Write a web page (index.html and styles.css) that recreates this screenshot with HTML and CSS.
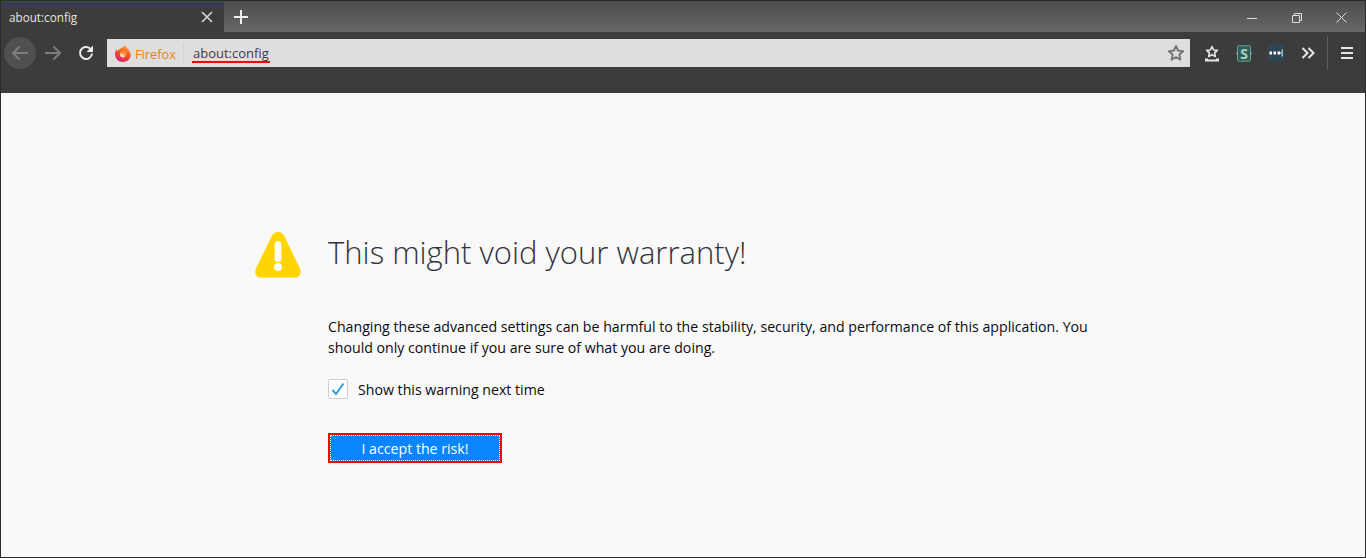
FILE: index.html
```html
<!DOCTYPE html>
<html lang="en">
<head>
<meta charset="utf-8">
<title>about:config</title>
<link rel="stylesheet" href="styles.css">
</head>
<body>
<div class="window">
  <header class="titlebar">
    <div class="tab">
      <span class="tab-title">about:config</span>
      <svg class="tab-close" width="12" height="12" viewBox="0 0 12 12"><path d="M1 1l10 10M11 1L1 11" stroke="#d8d8d8" stroke-width="1.6" fill="none"/></svg>
    </div>
    <div class="new-tab">
      <svg width="14" height="14" viewBox="0 0 14 14"><path d="M7 0v14M0 7h14" stroke="#eee" stroke-width="2" fill="none"/></svg>
    </div>
    <div class="spacer"></div>
    <div class="win-controls">
      <svg width="10" height="10" viewBox="0 0 10 10"><path d="M0 5.500h10" stroke="#ddd" fill="none"/></svg>
      <svg width="10" height="10" viewBox="0 0 10 10"><path d="M.5 2.500h7v7h-7zM2.500 2.500V.5h7v7h-2" stroke="#ddd" fill="none"/></svg>
      <svg width="11" height="11" viewBox="0 0 11 11"><path d="M.5.5l10 10M10.500.5l-10 10" stroke="#ddd" fill="none"/></svg>
    </div>
  </header>
  <nav class="toolbar">
    <div class="nav-buttons">
      <div class="back">
        <svg width="18" height="16" viewBox="0 0 18 16"><path d="M17 8H2M8.500 1.500L2 8l6.500 6.500" stroke="#7d7d7d" stroke-width="2" fill="none"/></svg>
      </div>
      <svg class="forward" width="18" height="16" viewBox="0 0 18 16"><path d="M1 8h15M9.500 1.500L16 8l-6.500 6.500" stroke="#7d7d7d" stroke-width="2" fill="none"/></svg>
      <svg class="reload" width="16" height="16" viewBox="0 0 16 16"><path d="M14 8.500A6 6 0 1 1 12 3.500" stroke="#eee" stroke-width="2" fill="none"/><path d="M15 0.500V7H8.500z" fill="#eee"/></svg>
    </div>
    <div class="urlbar">
      <svg class="ff-logo" width="16" height="17" viewBox="0 0 16 17">
        <defs><linearGradient id="ff" x1=".7" y1="0" x2=".3" y2="1"><stop offset="0" stop-color="#ffa52b"/><stop offset=".5" stop-color="#f4512b"/><stop offset="1" stop-color="#d9197a"/></linearGradient></defs>
        <path d="M10 .5c.2 1.500 2.800 2.500 3.800 4.500 1.500 2.500 2.200 4.500 2 5.800C15 14.500 12 17 8 17 3.500 17 0 13.500 0 9c0-2 .6-3.800 1.500-5 0 1 .4 1.600 1 2C4 3.500 7.500 3 10 .5z" fill="url(#ff)"/>
        <circle cx="8" cy="9.500" r="3" fill="#f7d9b8"/>
        <path d="M4.500 7.500c2.500-1.800 6-.8 6.300 2.300.2 2.300-1.800 3.700-3.600 3.300 2-.2 3-2 1.900-3.300-.9-1-2.500-.3-4.600-2.300z" fill="#f78a1f"/>
      </svg>
      <span class="ff-label">Firefox</span>
      <span class="url-sep"></span>
      <span class="url-text">about:config</span>
      <span class="spacer"></span>
      <svg class="star" width="18" height="18" viewBox="0 0 18 18"><path d="M9 2l2.100 4.600 5 .6-3.700 3.400 1 5L9 13.100l-4.400 2.500 1-5L1.900 7.200l5-.6z" stroke="#777" stroke-width="2" stroke-linejoin="round" fill="none"/></svg>
    </div>
    <div class="tools">
      <svg width="16" height="17" viewBox="0 0 16 17"><path d="M8 1.500l1.700 3.500 3.600.4-2.700 2.500.7 3.600L8 9.700l-3.300 1.800.7-3.600-2.700-2.500 3.600-.4z" stroke="#e6e6e6" stroke-width="1.600" stroke-linejoin="round" fill="none"/><path d="M1 13.500h3v1h8v-1h3v3H1z" fill="#e6e6e6"/></svg>
      <svg class="s-icon" width="16" height="17" viewBox="0 0 16 17"><rect x="1.500" y=".8" width="13" height="15.400" rx="1" fill="#2f5e56" stroke="#6c9e93"/><path d="M0 7.500l1.500 1-1.500 1zM16 7.500l-1.500 1 1.500 1z" fill="#8bb5aa"/><text class="s-glyph" x="8" y="13.500" text-anchor="middle">S</text></svg>
      <svg width="16" height="16" viewBox="0 0 16 16"><rect width="16" height="16" rx="1.500" fill="#2f4657"/><path d="M1.500 6.500h2.500v3H1.500zM5.500 6.500H8v3H5.500zM9.500 6.500H12v3H9.500zM12 7.500h2v1h-2z" fill="#fff"/><path d="M13.500 4.500h1.500v7h-1.500z" fill="#9fb2bf"/></svg>
      <svg class="chevrons" width="14" height="12" viewBox="0 0 14 12"><path d="M1.500 1l5 5-5 5M7.500 1l5 5-5 5" stroke="#e6e6e6" stroke-width="2" fill="none"/></svg>
    </div>
    <span class="tool-sep"></span>
    <svg class="menu" width="12" height="12" viewBox="0 0 12 12"><path d="M0 1h12M0 6h12M0 11h12" stroke="#e6e6e6" stroke-width="2" fill="none"/></svg>
  </nav>
  <main class="page">
    <div class="warning">
      <svg class="warn-icon" width="46" height="46" viewBox="0 0 46 46"><path d="M23 0c2.800 0 5 1.500 6.500 4.500L45 36.500c2 4.500-.5 9-5 9H6c-4.500 0-7-4.500-5-9L16.500 4.500C18 1.500 20.200 0 23 0z" fill="#ffd400"/><rect x="19.700" y="9" width="6.600" height="21" rx="3.300" fill="#fff"/><circle cx="23" cy="35" r="4" fill="#fff"/></svg>
      <div class="warn-body">
        <h1>This might void your warranty!</h1>
        <p>Changing these advanced settings can be harmful to the stability, security, and performance of this application. You should only continue if you are sure of what you are doing.</p>
        <label class="check">
          <span class="box"><svg width="14" height="14" viewBox="0 0 14 14"><path d="M1.500 8l3.500 4L12.500 1.500" stroke="#2e9bd8" stroke-width="2" fill="none"/></svg></span>
          <span>Show this warning next time</span>
        </label>
        <button class="accept"><span>I accept the risk!</span></button>
      </div>
    </div>
  </main>
</div>
</body>
</html>
```
FILE: styles.css
```css
* { box-sizing: border-box; }
html, body { margin: 0; height: 100%; overflow: hidden; }
body { font-family: "Open Sans", "Liberation Sans", sans-serif; }
.window { height: 558px; display: flex; flex-direction: column; border: 1px solid #2b2b2b; border-top: 0; background: #f9f9fa; }
.titlebar { height: 32px; flex: none; display: flex; background: linear-gradient(#4d4d4d, #676767); border-top: 1px solid #2b2b2b; }
.tab { width: 223px; display: flex; align-items: center; justify-content: space-between; padding: 0 11px 0 8px; background: #3c3c3c; border-top: 1px solid #2f3fbf; color: #e6e6e6; font-size: 11.7px; }
.new-tab { width: 34px; display: flex; align-items: center; justify-content: center; }
.spacer { flex: 1; }
.win-controls { width: 136px; display: flex; align-items: center; justify-content: space-between; padding: 2px 18px 0 18px; }
.toolbar { height: 61px; flex: none; display: flex; align-items: flex-start; padding-top: 7px; background: #3c3c3c; }
.nav-buttons { display: flex; align-items: center; height: 28px; gap: 12px; margin-left: 3px; }
.back { width: 32px; height: 32px; flex: none; margin-right: -5px; border-radius: 50%; background: #505050; display: flex; align-items: center; justify-content: center; }
.forward { margin-left: 1px; }
.reload { margin: 0 -1px 0 4px; }
.urlbar { width: 1083px; height: 28px; margin-left: 14px; display: flex; align-items: center; background: #dedede; padding: 0 5px 0 8px; }
.ff-logo { flex: none; }
.ff-label { margin: 1px 0 0 4px; color: #e8820e; font-size: 12.8px; }
.url-sep { width: 1px; height: 20px; margin: 0 8px 0 7px; background: #d2d2d2; }
.url-text { color: #3c3c46; font-size: 13px; border-bottom: 2px solid #f00; line-height: 15px; padding: 2px 1px 0; margin-top: 1px; }
.star { flex: none; }
.tools { display: flex; align-items: center; height: 28px; margin-left: 14px; gap: 16px; }
.chevrons { margin: 0 1px; }
.s-icon { overflow: visible; }
.s-glyph { font: bold 14px "Open Sans", sans-serif; fill: #a9cfc6; }
.tool-sep { width: 1px; height: 34px; margin: -3px 13px 0 11px; background: #5c5c5c; }
.menu { margin-top: 8px; }
.page { flex: 1; padding: 131px 0 0 254px; }
.warning { display: flex; gap: 27px; }
.warn-icon { flex: none; margin-top: 8px; }
.warn-body { width: 768px; }
h1 { margin: 0; font-size: 31.05px; font-weight: 300; line-height: 56px; color: #33333d; }
p { margin: 36px 0 0; font-size: 14.17px; line-height: 21px; color: #0c0c0d; }
.check { display: flex; align-items: center; gap: 10px; margin-top: 21px; font-size: 14.17px; color: #0c0c0d; }
.box { width: 20px; height: 20px; border: 1px solid #cfcfd3; border-radius: 2px; background: #fff; display: flex; align-items: center; justify-content: center; }
.accept { display: block; margin-top: 34px; width: 174px; height: 30px; padding: 0; border: 2px solid #f00; background: #0a84ff; color: #fff; font: 14.17px "Open Sans", sans-serif; }
.accept span { display: flex; align-items: center; justify-content: center; height: 100%; border: 1px dotted #fff; }
```
